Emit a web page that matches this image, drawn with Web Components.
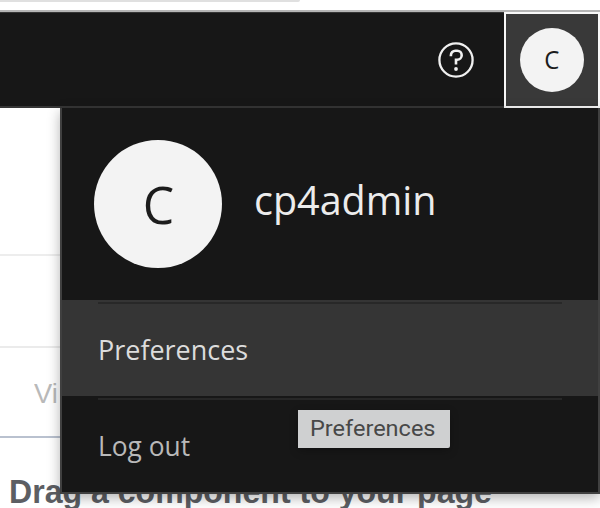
<!DOCTYPE html>
<html lang="en">
<head>
<meta charset="utf-8">
<title>User menu</title>
<style>
html,body{margin:0;width:600px;height:508px;overflow:hidden;background:#fff}
</style>
</head>
<body>
<app-screen></app-screen>
<script>
const define = (name, html, setup) => customElements.define(name, class extends HTMLElement {
  connectedCallback() {
    if (this.shadowRoot) return;
    const t = document.createElement('template');
    t.innerHTML = html;
    this.attachShadow({mode: 'open'}).append(t.content.cloneNode(true));
    if (setup) setup(this, this.shadowRoot);
  }
});

/* A single line of text condensed or widened to a given width. */
define('fit-text', `<style>
  :host{display:block;white-space:nowrap;line-height:1}
  span{display:inline-block;transform-origin:0 50%}
</style><span><slot></slot></span>`, (el, root) => {
  const w = +el.getAttribute('width'), s = root.querySelector('span');
  el.style.width = w + 'px';
  s.style.transform = `scaleX(${w / s.offsetWidth})`;
});

define('user-avatar', `<style>
  :host{display:flex;align-items:center;justify-content:center;flex:none;box-sizing:border-box;
    width:128px;height:128px;border-radius:50%;background:#f3f3f3;color:#1c1c1c;
    font:52px/1 "Open Sans",sans-serif}
  :host([small]){width:64px;height:64px;font-size:25px;padding-bottom:2px}
  span{transform:scaleX(.96)}
</style><span><slot></slot></span>`);

define('help-icon', `<style>:host{display:block;width:36px;height:36px}svg{display:block}</style>
<svg width="36" height="36" viewBox="0 0 36 36" fill="none" stroke="#f0f0f0" stroke-width="2.3">
<circle cx="18" cy="18" r="16.6"/>
<path d="M12.9 14.2v-1a4.5 4.5 0 0 1 4.5-4.5h1.8a4.5 4.5 0 0 1 0 9H18v4.8" stroke-width="2.6"/>
<circle cx="18" cy="27" r="1.9" fill="#f0f0f0" stroke="none"/></svg>`);

define('app-header', `<style>
  :host{display:flex;box-sizing:border-box;height:98px;border-top:2px solid #b5b5b5;
    background:linear-gradient(#353535 0 1px,#171717 1px 94px,#363636 94px 96px);margin-top:8px}
  help-icon{margin:30px 30px 0 auto}
  .user{box-sizing:border-box;width:96px;height:96px;border:2px solid #f8f8f8;background:#393939;
    display:flex;align-items:center;justify-content:center}
</style><help-icon></help-icon><div class="user"><user-avatar small>C</user-avatar></div>`);

define('menu-item', `<style>
  :host{display:block;box-sizing:border-box;height:96px;padding:36px 0 0 36px;color:#b9b9b9;
    font:27.5px/1 "Open Sans",sans-serif;
    background:linear-gradient(#272727,#272727) 36px 2px/464px 2px no-repeat,#171717}
  :host([active]){color:#dcdcdc;background:linear-gradient(#282828,#282828) 36px 2px/464px 2px no-repeat,#353535}
</style><slot></slot>`);

define('user-menu', `<style>
  :host{display:block;position:absolute;left:60px;top:108px;width:540px;height:386px;box-sizing:border-box;
    border:2px solid #404040;border-top:0;background:#171717;box-shadow:0 4px 12px rgba(0,0,0,.3)}
  header{height:192px;display:flex;padding:32px 0 0 32px;box-sizing:border-box;color:#ececec;
    font:39.5px/1 "Open Sans",sans-serif}
  header fit-text{margin:41px 0 0 32px}
</style>
<header><user-avatar>C</user-avatar><fit-text width="183">cp4admin</fit-text></header>
<menu-item active><fit-text width="150">Preferences</fit-text></menu-item>
<menu-item><fit-text width="92">Log out</fit-text></menu-item>`);

define('hover-tip', `<style>
  :host{position:absolute;left:298px;top:410px;width:152px;height:38px;box-sizing:border-box;display:block;
    padding:8px 0 0 12px;background:#cfd0d1;border-radius:0 0 2px 0;color:#484848;
    font:22px/1 Roboto,sans-serif;box-shadow:0 3px 8px rgba(0,0,0,.25)}
</style><fit-text width="125"><slot></slot></fit-text>`);

define('page-body', `<style>
  :host{display:block;height:400px;background:#fff;font-family:"Liberation Sans",sans-serif}
  .a{height:148px;border-bottom:2px solid #ededed;box-sizing:border-box}
  .b{height:92px;border-bottom:2px solid #ebebeb;box-sizing:border-box}
  .c{height:90px;border-bottom:2px solid #b9c1cf;box-sizing:border-box;padding:31px 0 0 34px;font-size:28.5px;color:#b9b9b9}
  .d{padding:36px 0 0 9px;font-size:34px;font-weight:bold;color:#5c5e63}
</style><div class="a"></div><div class="b"></div>
<div class="c"><fit-text width="24">Vi</fit-text></div>
<div class="d"><fit-text width="483">Drag a component to your page</fit-text></div>`);

define('app-screen', `<style>
  :host{display:flow-root;position:relative;width:600px;height:508px;overflow:hidden;background:#fff}
  .strip{height:2px;width:300px;background:#e0e0e0;border-radius:0 0 3px 0}
</style><div class="strip"></div>
<app-header></app-header><page-body></page-body>
<user-menu></user-menu><hover-tip>Preferences</hover-tip>`);
</script>
</body>
</html>
